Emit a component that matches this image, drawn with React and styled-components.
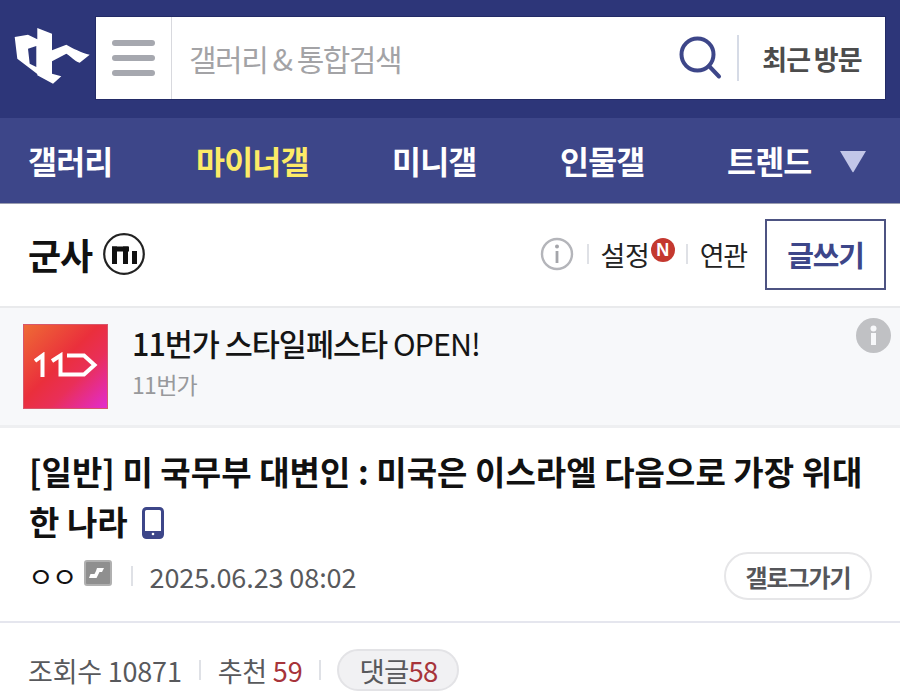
import React from "react";
import styled, { createGlobalStyle } from "styled-components";

const Global = createGlobalStyle`
  html, body { margin: 0; padding: 0; background: #fff; }
  body { font-family: "Noto Sans CJK KR", "Noto Sans", sans-serif; }
  * { box-sizing: border-box; }
`;

const Page = styled.div`
  width: 900px;
  height: 695px;
  overflow: hidden;
  background: #fff;
`;

const Header = styled.header`
  height: 118px;
  background: #2d3679;
  padding: 17px 15px 0 14px;
  display: flex;
  align-items: flex-start;
  gap: 6px;
`;

const LogoBox = styled.div`
  width: 76px;
  height: 82px;
  display: flex;
  align-items: center;
`;

const SearchBox = styled.div`
  flex: 1;
  height: 82px;
  background: #fff;
  display: flex;
  align-items: center;
  box-shadow: 0 0 0 1px #232b66;
`;

const MenuCell = styled.div`
  width: 76px;
  height: 100%;
  border-right: 1px solid #d8d9de;
  display: flex;
  flex-direction: column;
  justify-content: center;
  gap: 9px;
  padding: 0 16px 0 16px;
`;

const MenuBar = styled.span`
  display: block;
  height: 6px;
  border-radius: 3px;
  background: #a6a8af;
`;

const SearchText = styled.div`
  flex: 1;
  padding-left: 17px;
  font-size: 30px;
  letter-spacing: -1.5px;
  color: #a3a3a6;
  line-height: 1;
`;

const SearchIcon = styled.svg`
  width: 44px;
  height: 46px;
  margin-right: 15px;
  display: block;
`;

const VLine = styled.span`
  width: 2px;
  height: 46px;
  background: #d6dbe6;
`;

const Recent = styled.div`
  width: 146px;
  text-align: center;
  font-size: 27px;
  font-weight: 700;
  letter-spacing: -0.9px;
  word-spacing: -1.5px;
  color: #4c4c4c;
  white-space: nowrap;
`;

const Nav = styled.nav`
  height: 86px;
  background: #3d4689;
  border-bottom: 1px solid #9a9db0;
  display: flex;
  align-items: center;
  padding: 0 33px 0 28px;
`;

const NavItem = styled.div`
  width: ${p => p.$w}px;
  flex: none;
  font-size: 31.5px;
  font-weight: 700;
  letter-spacing: -0.8px;
  color: ${p => (p.$on ? "#fdeb67" : "#fff")};
  line-height: 1;
  white-space: nowrap;
`;

const NavArrow = styled.svg`
  width: 28px;
  height: 24px;
  margin-left: auto;
  display: block;
`;

const TitleRow = styled.div`
  height: 102px;
  display: flex;
  align-items: center;
  padding: 0 14px 2px 28px;
`;

const GallName = styled.h1`
  margin: 0;
  font-size: 36px;
  font-weight: 700;
  letter-spacing: -1.2px;
  color: #111;
  line-height: 1;
`;

const Badge = styled.svg`
  width: 42px;
  height: 42px;
  margin-left: 11px;
  display: block;
`;

const TitleActions = styled.div`
  margin-left: auto;
  display: flex;
  align-items: center;
`;

const InfoIcon = styled.svg`
  width: 34px;
  height: 34px;
  display: block;
`;

const Sep = styled.span`
  display: block;
  flex: none;
  width: 2px;
  height: 20px;
  margin: 0 ${p => p.$r}px 0 ${p => p.$l}px;
  background: #dfe1e6;
`;

const ActionLink = styled.span`
  font-size: 27px;
  letter-spacing: ${p => p.$ls}px;
  color: #222;
  line-height: 1;
`;

const NewMark = styled.span`
  display: flex;
  align-items: center;
  justify-content: center;
  width: 24px;
  height: 24px;
  margin: -8px 0 0 1px;
  border-radius: 50%;
  background: #c4382f;
  color: #fff;
  font-family: "Liberation Sans", sans-serif;
  font-size: 18px;
  font-weight: 700;
  line-height: 1;
`;

const WriteButton = styled.div`
  width: 121px;
  height: 71px;
  margin-left: 18px;
  border: 2px solid #4d5382;
  display: flex;
  align-items: center;
  justify-content: center;
  font-size: 29px;
  font-weight: 700;
  letter-spacing: -1.2px;
  color: #3d4689;
`;

const Ad = styled.section`
  position: relative;
  height: 122px;
  background: #f7f8fa;
  border-top: 2px solid #e9eaec;
  border-bottom: 3px solid #eeeff1;
  display: flex;
  padding: 16px 0 0 23px;
`;

const AdLogo = styled.div`
  width: 85px;
  height: 85px;
  border: 1px solid #d8566a;
  background: linear-gradient(135deg, #ee6b35 0%, #ea2f3c 45%, #e92f58 65%, #e22bd0 100%);
  display: flex;
  align-items: center;
  justify-content: center;
`;

const AdLogoMark = styled.svg`
  width: 64px;
  height: 30px;
  display: block;
`;

const AdBody = styled.div`
  margin-left: 24px;
  display: flex;
  flex-direction: column;
`;

const AdTitle = styled.div`
  font-size: 30.5px;
  letter-spacing: -1px;
  font-weight: 500;
  color: #151515;
  line-height: 38px;
`;

const AdTitleLatin = styled.span`
  font-weight: 400;
`;

const AdSource = styled.div`
  font-size: 23px;
  letter-spacing: -0.7px;
  color: #98999c;
  line-height: 44px;
`;

const AdInfo = styled.svg`
  position: absolute;
  top: 10px;
  right: 9px;
  width: 35px;
  height: 35px;
  display: block;
`;

const Post = styled.section`
  padding: 18px 28px 0 29px;
  height: 195px;
  border-bottom: 2px solid #e5e6ee;
`;

const PostTitle = styled.h2`
  margin: 0;
  font-size: 33px;
  font-weight: 700;
  letter-spacing: 0.05px;
  line-height: 50px;
  color: #111;
  word-break: break-all;
`;

const Phone = styled.svg`
  width: 22px;
  height: 32px;
  margin-left: 14px;
  vertical-align: -4px;
`;

const MetaRow = styled.div`
  display: flex;
  align-items: center;
  height: 50px;
  margin-top: 5px;
`;

const Writer = styled.span`
  font-size: 28px;
  color: #111;
  letter-spacing: -2px;
  margin-left: -1px;
  line-height: 1;
`;

const GallogIcon = styled.svg`
  width: 28px;
  height: 26px;
  margin: -6px 0 0 8px;
  display: block;
`;

const DateText = styled.span`
  font-size: 27px;
  letter-spacing: -0.1px;
  color: #58595c;
  line-height: 1;
`;

const GallogButton = styled.div`
  margin-left: auto;
  width: 148px;
  height: 48px;
  border: 2px solid #e6e6e8;
  border-radius: 24px;
  display: flex;
  align-items: center;
  justify-content: center;
  font-size: 24px;
  font-weight: 700;
  letter-spacing: -1.1px;
  color: #55565a;
`;

const Stats = styled.div`
  height: 94px;
  display: flex;
  align-items: center;
  padding: 0 0 0 28px;
`;

const StatText = styled.span`
  font-size: 27px;
  letter-spacing: -0.2px;
  color: #58595c;
  line-height: 1;
`;

const Red = styled.span`
  color: #a7343a;
`;

const CommentPill = styled.div`
  height: 42px;
  width: 122px;
  border: 2px solid #e3e3e6;
  border-radius: 21px;
  background: #f1f1f3;
  display: flex;
  align-items: center;
  justify-content: center;
  font-size: 27.5px;
  letter-spacing: -0.8px;
  color: #58595c;
`;

export default function App() {
  return (
    <Page>
      <Global />
      <Header>
        <LogoBox>
          <svg width="76" height="82" viewBox="0 0 76 82">
            <path
              fill="#fff"
              fillRule="evenodd"
              d="M23.3 11 L38 16.7 V33.3 L52.3 27.7 C58 31 68 36 75.7 37.7 L65.7 45.7 C60 44 57 39 52.3 36.7 L38 44.3 V56.7 L47.3 59.3 L39 66.7 L23.3 58.3 V57 L3.3 41.7 L0.7 20 L14 17.7 L23.3 22.3 Z M14 31.7 L22.3 29 V50 L15.7 46.7 Z"
            />
          </svg>
        </LogoBox>
        <SearchBox>
          <MenuCell>
            <MenuBar />
            <MenuBar />
            <MenuBar />
          </MenuCell>
          <SearchText>갤러리 &amp; 통합검색</SearchText>
          <SearchIcon viewBox="0 0 44 46">
            <circle cx="19.5" cy="19.5" r="16" fill="none" stroke="#3d4689" strokeWidth="4" />
            <line x1="31" y1="31" x2="41" y2="41.5" stroke="#3d4689" strokeWidth="4" strokeLinecap="round" />
          </SearchIcon>
          <VLine />
          <Recent>최근 방문</Recent>
        </SearchBox>
      </Header>
      <Nav>
        <NavItem $w={168}>갤러리</NavItem>
        <NavItem $w={196} $on>마이너갤</NavItem>
        <NavItem $w={168}>미니갤</NavItem>
        <NavItem $w={167}>인물갤</NavItem>
        <NavItem $w={90}>트렌드</NavItem>
        <NavArrow viewBox="0 0 28 24">
          <path d="M1 2 H27 L14.5 23 Q14 23.6 13.5 23 Z" fill="#c2c6e8" />
        </NavArrow>
      </Nav>
      <TitleRow>
        <GallName>군사</GallName>
        <Badge viewBox="0 0 42 42">
          <circle cx="21" cy="21" r="19.8" fill="none" stroke="#222" strokeWidth="2.2" />
          <rect x="9" y="13.5" width="17" height="5" fill="#111" />
          <rect x="9" y="13.5" width="5" height="17.5" fill="#111" />
          <rect x="20" y="13.5" width="5" height="17.5" fill="#111" />
          <rect x="29" y="18" width="5" height="13" fill="#111" />
        </Badge>
        <TitleActions>
          <InfoIcon viewBox="0 0 34 34">
            <circle cx="17" cy="17" r="15" fill="none" stroke="#b4b5ba" strokeWidth="2.4" />
            <circle cx="17" cy="9.5" r="2" fill="#a4a5aa" />
            <rect x="15.6" y="14" width="2.8" height="12" fill="#a4a5aa" />
          </InfoIcon>
          <Sep $l={13} $r={11} />
          <ActionLink $ls={-0.2}>설정</ActionLink>
          <NewMark>N</NewMark>
          <Sep $l={11} $r={12} />
          <ActionLink $ls={-1.2}>연관</ActionLink>
          <WriteButton>글쓰기</WriteButton>
        </TitleActions>
      </TitleRow>
      <Ad>
        <AdLogo>
          <AdLogoMark viewBox="0 0 64 30">
            <path
              d="M1 9 L8.5 3.5 V25 M18 9 L26.5 3.5 V22.5 H50 L60.5 13 L50 3.5 H33"
              fill="none"
              stroke="#fff"
              strokeWidth="4"
            />
          </AdLogoMark>
        </AdLogo>
        <AdBody>
          <AdTitle>
            11번가 스타일페스타 <AdTitleLatin>OPEN!</AdTitleLatin>
          </AdTitle>
          <AdSource>11번가</AdSource>
        </AdBody>
        <AdInfo viewBox="0 0 35 35">
          <circle cx="17.5" cy="17.5" r="17.5" fill="#c0c1c4" />
          <circle cx="17.5" cy="10.5" r="3" fill="#f7f8fa" />
          <rect x="15" y="15" width="5" height="12" fill="#f7f8fa" />
        </AdInfo>
      </Ad>
      <Post>
        <PostTitle>
          [일반] 미 국무부 대변인 : 미국은 이스라엘 다음으로 가장 위대한 나라
          <Phone viewBox="0 0 22 32">
            <rect x="1.5" y="1.5" width="19" height="29" rx="3" fill="none" stroke="#3d4689" strokeWidth="3" />
            <rect x="1.5" y="24" width="19" height="6.5" fill="#3d4689" />
            <circle cx="11" cy="27" r="1.3" fill="#fff" />
          </Phone>
        </PostTitle>
        <MetaRow>
          <Writer>ㅇㅇ</Writer>
          <GallogIcon viewBox="0 0 28 26">
            <rect x="1" y="1" width="26" height="24" rx="2" fill="#8f8f8f" stroke="#b0b0b0" strokeWidth="2" />
            <path d="M13 8 H20 L18 12 H15.5 L12.5 18 H5 L6.5 14 H10.5 L12 11 Z" fill="#fff" />
          </GallogIcon>
          <Sep $l={19} $r={17} />
          <DateText>2025.06.23 08:02</DateText>
          <GallogButton>갤로그가기</GallogButton>
        </MetaRow>
      </Post>
      <Stats>
        <StatText>조회수 10871</StatText>
        <Sep $l={17} $r={17} />
        <StatText>
          추천 <Red>59</Red>
        </StatText>
        <Sep $l={17} $r={16} />
        <CommentPill>
          댓글<Red>58</Red>
        </CommentPill>
      </Stats>
    </Page>
  );
}
